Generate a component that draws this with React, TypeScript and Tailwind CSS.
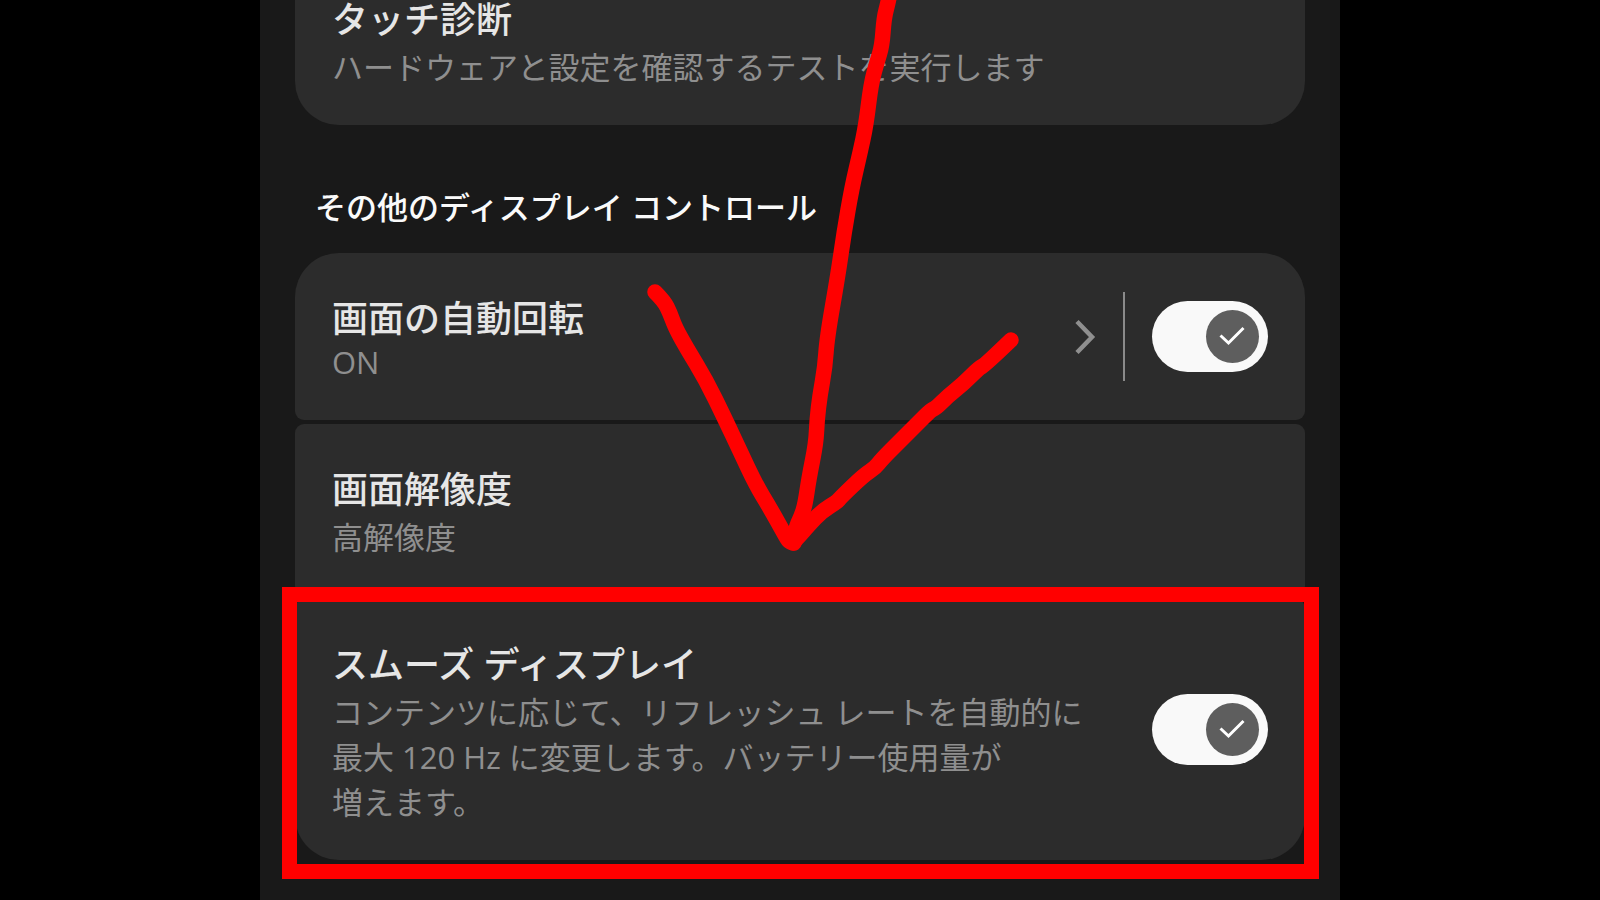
import { useId, useState } from "react"
import type { ReactNode } from "react"

const Switch = ({ id }: { id: string }) => {
  const [on, setOn] = useState(true)

  return (
    <span className="relative block h-[71px] w-[116px] shrink-0">
      <input
        id={id}
        type="checkbox"
        role="switch"
        checked={on}
        onChange={(e) => setOn(e.target.checked)}
        className="block h-full w-full cursor-pointer appearance-none rounded-full bg-[#5e5e5e] checked:bg-[#f9f9f9]"
      />
      <span
        className={`pointer-events-none absolute top-[9px] h-[53px] w-[53px] rounded-full ${
          on ? "right-[9px] bg-[#5e5e5e]" : "left-[9px] bg-[#f9f9f9]"
        }`}
      >
        {on && (
          <svg viewBox="0 0 53 53" className="h-full w-full" fill="none" stroke="#ffffff" strokeWidth="3">
            <path d="M14.5 25.5L22.5 33L37.5 18" />
          </svg>
        )}
      </span>
    </span>
  )
}

interface RowProps {
  title: string
  htmlFor?: string
  children: ReactNode
}

const RowText = ({ title, htmlFor, children }: RowProps) => (
  <div className="min-w-0 flex-1 pt-[11px]">
    <h3 className="mb-1.5 text-[36px] leading-[39px] font-medium text-[#e6e6e6]">
      {htmlFor ? <label htmlFor={htmlFor}>{title}</label> : title}
    </h3>
    {children}
  </div>
)

// Rounds off a hand drawn line by curving through the midpoints
const smooth = (points: number[][]) => {
  let d = `M${points[0][0]} ${points[0][1]}`
  for (let i = 1; i < points.length - 1; i++) {
    const [x, y] = points[i]
    const [nx, ny] = points[i + 1]
    d += `Q${x} ${y} ${(x + nx) / 2} ${(y + ny) / 2}`
  }
  const last = points[points.length - 1]
  return `${d}L${last[0]} ${last[1]}`
}

const strokes = [
  [[631, -12], [628, 3], [624, 18], [622, 46], [617, 62], [611, 84], [606, 125], [600, 153], [592, 187], [584, 233], [578, 275], [567, 338], [565, 367], [560, 395], [557, 420], [556, 443], [549, 478], [545, 505], [541, 517], [537, 525], [533, 541]],
  [[395, 292], [404, 301], [410, 313], [415, 327], [426, 347], [446, 380], [465, 419], [480, 451], [496, 485], [510, 508], [525, 535], [529, 542], [534, 543]],
  [[751, 340], [725, 365], [719, 368], [703, 384], [688, 396], [676, 408], [671, 410], [657, 424], [640, 441], [622, 459], [615, 468], [604, 475], [580, 498], [577, 502], [562, 511], [548, 526], [540, 535], [533, 543]],
]

const Arrow = () => (
  <svg
    viewBox="0 0 1080 900"
    className="pointer-events-none absolute top-0 left-1/2 h-[900px] w-[1080px] -translate-x-1/2"
    fill="none"
    stroke="#ff0000"
    strokeWidth="15.5"
    strokeLinecap="round"
    strokeLinejoin="round"
    aria-hidden="true"
  >
    {strokes.map((points, i) => (
      <path key={i} d={smooth(points)} />
    ))}
  </svg>
)

export default function App() {
  const rotateId = useId()
  const smoothId = useId()

  return (
    <div className="min-h-screen bg-black font-['Open_Sans','Noto_Sans_CJK_JP',sans-serif]">
      <main
        lang="ja"
        className="relative mx-auto min-h-screen w-full max-w-[1080px] overflow-hidden bg-[#191919] px-[35px] pb-10"
      >
        {/* scrolled so that the first card is partly off screen */}
        <section className="-mt-[46px] rounded-b-[44px] bg-[#2c2c2c] px-[37px] py-[35px]">
          <RowText title="タッチ診断">
            <p className="text-[31px] leading-[45px] text-[#8f8f8f]">ハードウェアと設定を確認するテストを実行します</p>
          </RowText>
        </section>

        <h2 className="mt-[60px] mb-[23px] px-5 text-[31px] leading-[45px] font-medium text-[#fafafa]">
          その他のディスプレイ コントロール
        </h2>

        <div className="flex flex-col gap-1">
          <section className="flex items-center rounded-t-[44px] rounded-b-[9px] bg-[#2c2c2c] px-[37px] py-[35px]">
            <RowText title="画面の自動回転" htmlFor={rotateId}>
              <p className="mb-1 text-[31px] leading-[37px] text-[#8f8f8f]">ON</p>
            </RowText>
            <button type="button" aria-label="画面の自動回転の詳細" className="mr-[27px] cursor-pointer">
              <svg viewBox="0 0 22 36" className="h-9 w-[22px]" fill="none" stroke="#8f8f8f" strokeWidth="4.5">
                <path d="M3 2.5L18 18L3 33.5" />
              </svg>
            </button>
            <span className="mr-[27px] h-[89px] w-0.5 bg-[#8a8a8a]" />
            <Switch id={rotateId} />
          </section>

          <section className="rounded-[9px] bg-[#2c2c2c] px-[37px] py-[35px]">
            <RowText title="画面解像度">
              <p className="text-[31px] leading-[45px] text-[#8f8f8f]">高解像度</p>
            </RowText>
          </section>

          <section className="relative flex items-center gap-10 rounded-t-[9px] rounded-b-[44px] bg-[#2c2c2c] px-[37px] py-[35px]">
            <RowText title="スムーズ ディスプレイ" htmlFor={smoothId}>
              <p className="text-[31px] leading-[45px] text-[#8f8f8f]">
                コンテンツに応じて、リフレッシュ レートを自動的に
                <br />
                最大 120 Hz に変更します。バッテリー使用量が
                <br />
                増えます。
              </p>
            </RowText>
            <Switch id={smoothId} />
            <div className="pointer-events-none absolute -top-3 -right-[14px] -bottom-[19px] -left-[13px] border-[15px] border-[#ff0000]" />
          </section>
        </div>

        <Arrow />
      </main>
    </div>
  )
}
